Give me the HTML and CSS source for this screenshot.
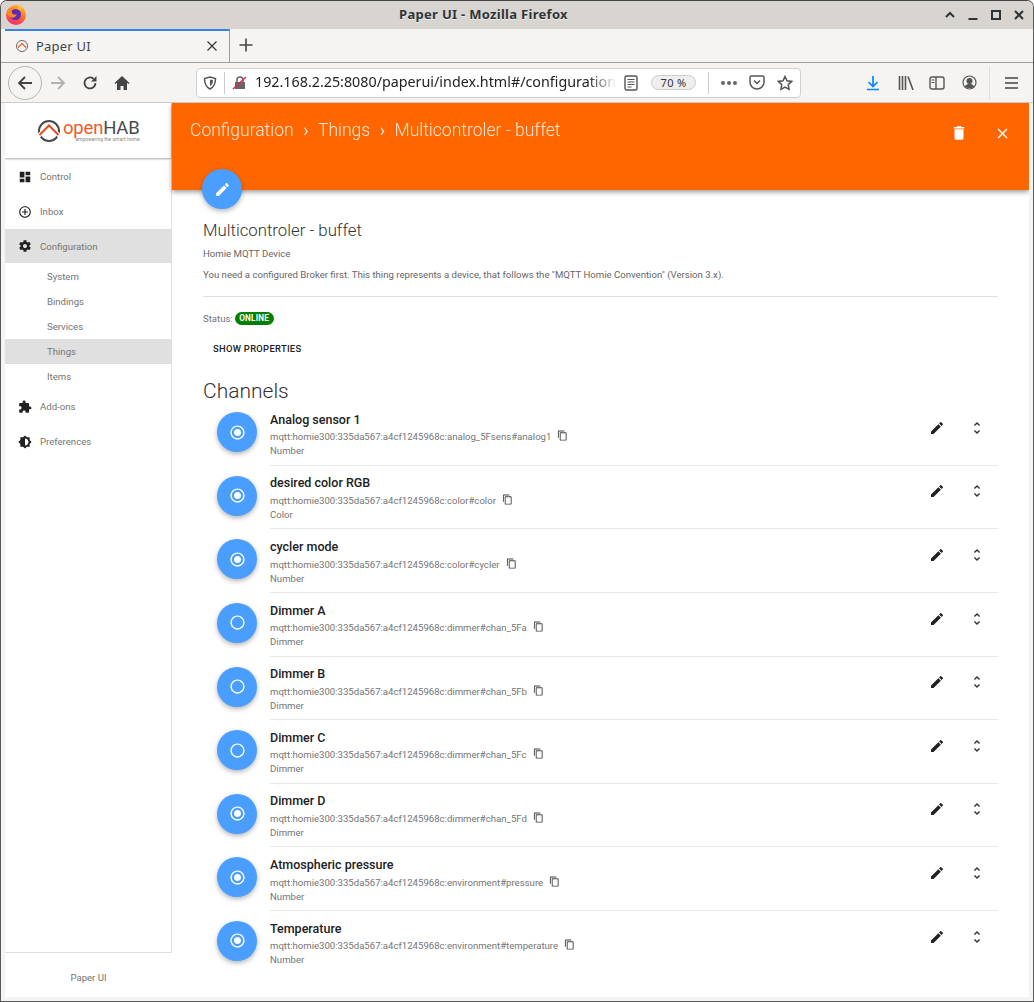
FILE: index.html
```html
<!DOCTYPE html>
<html>
<head>
	<meta http-equiv="Content-Type" content="text/html;charset=UTF-8">
	<title>Paper UI</title>
	<link rel="stylesheet" href="styles.css">
</head>
<body>
	<svg class="defs" width="0" height="0">
		<symbol id="i-edit" viewBox="0 0 24 24"><path d="M3 17.25V21h3.75L17.81 9.94l-3.75-3.75L3 17.25zM20.71 7.04c.39-.39.39-1.02 0-1.41l-2.34-2.34c-.39-.39-1.02-.39-1.41 0l-1.83 1.83 3.75 3.75 1.83-1.83z"/></symbol>
		<symbol id="i-delete" viewBox="0 0 24 24"><path d="M6 19c0 1.1.9 2 2 2h8c1.1 0 2-.9 2-2V7H6v12zM19 4h-3.5l-1-1h-5l-1 1H5v2h14V4z"/></symbol>
		<symbol id="i-close" viewBox="0 0 24 24"><path d="M19 6.41L17.59 5 12 10.59 6.41 5 5 6.41 10.59 12 5 17.59 6.41 19 12 13.41 17.59 19 19 17.59 13.41 12z"/></symbol>
		<symbol id="i-dash" viewBox="0 0 24 24"><path d="M3 13h8V3H3v10zm0 8h8v-6H3v6zm10 0h8V11h-8v10zm0-18v6h8V3h-8z"/></symbol>
		<symbol id="i-add" viewBox="0 0 24 24"><path d="M13 7h-2v4H7v2h4v4h2v-4h4v-2h-4V7zm-1-5C6.48 2 2 6.48 2 12s4.48 10 10 10 10-4.48 10-10S17.52 2 12 2zm0 18c-4.41 0-8-3.59-8-8s3.59-8 8-8 8 3.59 8 8-3.59 8-8 8z"/></symbol>
		<symbol id="i-gear" viewBox="0 0 24 24"><path d="M19.43 12.98c.04-.32.07-.64.07-.98s-.03-.66-.07-.98l2.11-1.65c.19-.15.24-.42.12-.64l-2-3.46c-.12-.22-.39-.3-.61-.22l-2.49 1c-.52-.4-1.08-.73-1.69-.98l-.38-2.65C14.46 2.18 14.25 2 14 2h-4c-.25 0-.46.18-.49.42l-.38 2.65c-.61.25-1.17.59-1.69.98l-2.49-1c-.23-.09-.49 0-.61.22l-2 3.46c-.13.22-.07.49.12.64l2.11 1.65c-.04.32-.07.65-.07.98s.03.66.07.98l-2.11 1.65c-.19.15-.24.42-.12.64l2 3.46c.12.22.39.3.61.22l2.49-1c.52.4 1.08.73 1.69.98l.38 2.65c.03.24.24.42.49.42h4c.25 0 .46-.18.49-.42l.38-2.65c.61-.25 1.17-.59 1.69-.98l2.49 1c.23.09.49 0 .61-.22l2-3.46c.12-.22.07-.49-.12-.64l-2.11-1.65zM12 15.5c-1.93 0-3.5-1.57-3.5-3.5s1.57-3.5 3.5-3.5 3.5 1.57 3.5 3.5-1.57 3.5-3.5 3.5z"/></symbol>
		<symbol id="i-ext" viewBox="0 0 24 24"><path d="M20.5 11H19V7c0-1.1-.9-2-2-2h-4V3.5C13 2.12 11.88 1 10.5 1S8 2.12 8 3.5V5H4c-1.1 0-1.99.9-1.99 2v3.8H3.5c1.49 0 2.7 1.21 2.7 2.7s-1.21 2.7-2.7 2.7H2V20c0 1.1.9 2 2 2h3.8v-1.5c0-1.49 1.21-2.7 2.7-2.7 1.49 0 2.7 1.21 2.7 2.7V22H17c1.1 0 2-.9 2-2v-4h1.5c1.38 0 2.5-1.12 2.5-2.5S21.88 11 20.5 11z"/></symbol>
		<symbol id="i-bright" viewBox="0 0 24 24"><path d="M20 15.31L23.31 12 20 8.69V4h-4.69L12 .69 8.69 4H4v4.69L.69 12 4 15.31V20h4.69L12 23.31 15.31 20H20v-4.69zM12 18V6c3.31 0 6 2.69 6 6s-2.69 6-6 6z"/></symbol>
		<symbol id="i-unfold" viewBox="0 0 24 24"><path d="M12 5.83L15.17 9l1.41-1.41L12 3 7.41 7.59 8.83 9 12 5.83zm0 12.34L8.83 15l-1.41 1.41L12 21l4.59-4.59L15.17 15 12 18.17z"/></symbol>
		<symbol id="i-on" viewBox="0 0 24 24"><path d="M12 7c-2.76 0-5 2.24-5 5s2.24 5 5 5 5-2.24 5-5-2.24-5-5-5zm0-5C6.48 2 2 6.48 2 12s4.48 10 10 10 10-4.48 10-10S17.52 2 12 2zm0 18c-4.42 0-8-3.58-8-8s3.58-8 8-8 8 3.58 8 8-3.58 8-8 8z"/></symbol>
		<symbol id="i-off" viewBox="0 0 24 24"><path d="M12 2C6.48 2 2 6.48 2 12s4.48 10 10 10 10-4.48 10-10S17.52 2 12 2zm0 18c-4.42 0-8-3.58-8-8s3.58-8 8-8 8 3.58 8 8-3.58 8-8 8z"/></symbol>
		<symbol id="i-copy" viewBox="0 0 24 24"><path d="M16 1H4c-1.1 0-2 .9-2 2v14h2V3h12V1zm3 4H8c-1.1 0-2 .9-2 2v14c0 1.1.9 2 2 2h11c1.1 0 2-.9 2-2V7c0-1.1-.9-2-2-2zm0 16H8V7h11v14z"/></symbol>
	</svg>

	<div class="window">
		<!-- title bar -->
		<div class="titlebar">
			<svg class="fx-logo" width="22" height="22" viewBox="0 0 22 22">
				<defs>
					<linearGradient id="fxg" x1="0.7" y1="0" x2="0.3" y2="1">
						<stop offset="0" stop-color="#ffbd2e"/>
						<stop offset="0.5" stop-color="#ff6a2b"/>
						<stop offset="1" stop-color="#f0267e"/>
					</linearGradient>
				</defs>
				<circle cx="11" cy="12" r="10" fill="url(#fxg)"/>
				<path d="M15 1c2 2 2 4 1 6l-3-1z" fill="#ffc93a"/>
				<circle cx="10.5" cy="11.5" r="5.5" fill="#5b2bb8"/>
				<path d="M2 9c1-3 4-5 7-4-2 1-3 3-2 5 1 2 4 2 5 1-1 3-4 5-7 3-2-1-3-3-3-5z" fill="#ff8a1f"/>
			</svg>
			<div class="win-title">Paper UI - Mozilla Firefox</div>
			<div class="win-btns">
				<svg width="12" height="12" viewBox="0 0 12 12"><path d="M2 8l4-4 4 4" fill="none" stroke="#2e3436" stroke-width="2"/></svg>
				<svg width="12" height="12" viewBox="0 0 12 12"><path d="M1.500 10h9" fill="none" stroke="#2e3436" stroke-width="2"/></svg>
				<svg width="12" height="12" viewBox="0 0 12 12"><path d="M2 2h8v8H2z" fill="none" stroke="#2e3436" stroke-width="2"/></svg>
				<svg width="12" height="12" viewBox="0 0 12 12"><path d="M2 2l8 8M10 2l-8 8" fill="none" stroke="#2e3436" stroke-width="2"/></svg>
			</div>
		</div>

		<!-- tabs -->
		<div class="tabbar">
			<div class="tab">
				<svg class="tab-fav" width="14" height="14" viewBox="0 0 14 14">
					<circle cx="7" cy="7" r="5.500" fill="none" stroke="#666" stroke-width="1"/>
					<path d="M3 8.500L7 4.500l4 4" fill="none" stroke="#e8562a" stroke-width="1.200"/>
				</svg>
				<span class="tab-name">Paper UI</span>
				<svg class="tab-x" width="12" height="12" viewBox="0 0 12 12"><path d="M1.500 1.500l9 9M10.500 1.500l-9 9" stroke="#3a3a3a" stroke-width="1.300"/></svg>
			</div>
			<svg class="tab-new" width="16" height="16" viewBox="0 0 16 16"><path d="M8 1.500v13M1.500 8h13" stroke="#444" stroke-width="1.600"/></svg>
		</div>

		<!-- toolbar -->
		<div class="toolbar">
			<div class="back-btn">
				<svg width="18" height="18" viewBox="0 0 18 18"><path d="M16 9H3M9 3L3 9l6 6" fill="none" stroke="#444" stroke-width="1.800"/></svg>
			</div>
			<svg class="tb-forward" width="18" height="18" viewBox="0 0 18 18"><path d="M2 9h13M9 3l6 6-6 6" fill="none" stroke="#b1b1b1" stroke-width="1.800"/></svg>
			<svg class="tb-reload" width="16" height="16" viewBox="0 0 16 16"><path d="M13.500 8A5.500 5.500 0 1 1 11.500 3.700" fill="none" stroke="#444" stroke-width="1.800"/><path d="M14.500 1v5.500H9z" fill="#444"/></svg>
			<svg class="tb-home" width="16" height="16" viewBox="0 0 16 16"><path d="M8 1L0.500 8l1 1L3 7.800V15h3.500v-4h3v4H13V7.800L14.500 9l1-1z" fill="#444"/></svg>
			<div class="urlbar">
				<svg class="url-shield" width="14" height="14" viewBox="0 0 14 14"><path d="M7 1l5.500 1.500c0 5-1.500 8.500-5.500 10.500C3 11 1.500 7.500 1.500 2.500z" fill="none" stroke="#555" stroke-width="1.500"/><path d="M7 3.500l3 .8c0 2.500-.8 4.500-3 5.700z" fill="#555"/></svg>
				<span class="url-sep"></span>
				<svg class="url-lock" width="16" height="16" viewBox="0 0 16 16"><path d="M3 7h10v7H3z" fill="#666"/><path d="M5 7V5a3 3 0 0 1 6 0v2" fill="none" stroke="#666" stroke-width="1.500"/><path d="M1 14L14 2" stroke="#e22850" stroke-width="1.500"/></svg>
				<span class="url-text">192.168.2.25:8080/paperui/index.html#/configuration</span>
				<svg class="url-reader" width="14" height="16" viewBox="0 0 14 16"><rect x="1" y="1" width="12" height="14" rx="1.500" fill="none" stroke="#555" stroke-width="1.400"/><path d="M3.500 4.500h7M3.500 7h7M3.500 9.500h7M3.500 12h4" stroke="#555" stroke-width="1.100"/></svg>
				<span class="url-zoom">70 %</span>
				<span class="url-sep url-sep2"></span>
				<span class="url-dots"><i></i><i></i><i></i></span>
				<svg class="url-pocket" width="16" height="15" viewBox="0 0 16 15"><path d="M1 2.500A1.500 1.500 0 0 1 2.500 1h11A1.500 1.500 0 0 1 15 2.500V7a7 7 0 0 1-14 0z" fill="none" stroke="#555" stroke-width="1.500"/><path d="M5 5.500l3 3 3-3" fill="none" stroke="#555" stroke-width="1.500"/></svg>
				<svg class="url-star" width="16" height="16" viewBox="0 0 16 16"><path d="M8 1.500l2 4.300 4.700.6-3.500 3.200.9 4.700L8 12l-4.100 2.300.9-4.700L1.300 6.400 6 5.800z" fill="none" stroke="#555" stroke-width="1.500"/></svg>
			</div>
			<svg class="tb-dl" width="14" height="16" viewBox="0 0 14 16"><path d="M7 1v10M2.500 7L7 11.500 11.500 7" fill="none" stroke="#0a84ff" stroke-width="1.700"/><path d="M1 14.500h12" stroke="#0a84ff" stroke-width="1.700"/></svg>
			<svg class="tb-lib" width="16" height="14" viewBox="0 0 16 14"><path d="M1.500 0v14M4.500 0v14M7.500 0v14M10 .5l5 13.500" fill="none" stroke="#555" stroke-width="1.600"/></svg>
			<svg class="tb-side" width="16" height="14" viewBox="0 0 16 14"><rect x="1" y="1" width="14" height="12" rx="2" fill="none" stroke="#555" stroke-width="1.400"/><path d="M7 1v12" stroke="#555" stroke-width="1.400"/><path d="M2.500 4h3M2.500 6.500h3" stroke="#555"/></svg>
			<svg class="tb-acct" width="15" height="15" viewBox="0 0 15 15"><circle cx="7.500" cy="7.500" r="6.500" fill="none" stroke="#555" stroke-width="1.200"/><circle cx="7.500" cy="6" r="3" fill="#555"/><path d="M2.800 11.500c1-2 2.800-2.500 4.700-2.500s3.700.5 4.700 2.500c-1.500 2-7.900 2-9.400 0z" fill="#555"/></svg>
			<span class="tb-sep"></span>
			<svg class="tb-menu" width="13" height="12" viewBox="0 0 13 12"><path d="M0 1h13M0 6h13M0 11h13" stroke="#444" stroke-width="1.500"/></svg>
		</div>

		<!-- page -->
		<div class="page">
			<div class="side-col">
				<div class="sidebar">
					<div class="brand">
						<svg width="24" height="24" viewBox="0 0 24 24"><circle cx="12" cy="12" r="10" fill="none" stroke="#4a4a4a" stroke-width="2"/><path d="M1.500 17L12 6.500 22.500 17" fill="none" stroke="#fff" stroke-width="4"/><path d="M2.500 16L12 6.500 21.500 16" fill="none" stroke="#e64a19" stroke-width="2"/></svg>
						<div class="brand-text">
							<div class="brand-name"><span class="brand-open">open</span><span class="brand-hab">HAB</span></div>
							<div class="brand-tag">empowering the smart home</div>
						</div>
					</div>
					<ul class="menu">
						<li class="menu-item"><svg class="menu-icon"><use href="#i-dash"/></svg>Control</li>
						<li class="menu-item"><svg class="menu-icon"><use href="#i-add"/></svg>Inbox</li>
						<li class="menu-item menu-active"><svg class="menu-icon"><use href="#i-gear"/></svg>Configuration</li>
						<li class="sub-item sub-first">System</li>
						<li class="sub-item">Bindings</li>
						<li class="sub-item">Services</li>
						<li class="sub-item sub-active">Things</li>
						<li class="sub-item">Items</li>
						<li class="menu-item"><svg class="menu-icon"><use href="#i-ext"/></svg>Add-ons</li>
						<li class="menu-item"><svg class="menu-icon"><use href="#i-bright"/></svg>Preferences</li>
					</ul>
				</div>
				<div class="side-foot">Paper UI</div>
			</div>

			<div class="main">
				<div class="head">
					<div class="crumbs">
						<span>Configuration</span><span class="crumb-sep">›</span><span>Things</span><span class="crumb-sep">›</span><span>Multicontroler - buffet</span>
					</div>
					<svg class="head-icon head-del"><use href="#i-delete"/></svg>
					<svg class="head-icon head-close"><use href="#i-close"/></svg>
					<div class="fab head-fab"><svg class="fab-edit"><use href="#i-edit"/></svg></div>
				</div>

				<div class="content">
					<h1 class="thing-name">Multicontroler - buffet</h1>
					<p class="thing-type">Homie MQTT Device</p>
					<p class="thing-desc">You need a configured Broker first. This thing represents a device, that follows the "MQTT Homie Convention" (Version 3.x).</p>
					<div class="status">Status: <span class="badge">ONLINE</span></div>
					<div class="show-props">SHOW PROPERTIES</div>
					<h2 class="channels-title">Channels</h2>

					<div class="row">
						<div class="fab"><svg class="fab-radio"><use href="#i-on"/></svg></div>
						<div class="row-text">
							<div class="row-name">Analog sensor 1</div>
							<div class="row-uid">mqtt:homie300:335da567:a4cf1245968c:analog_5Fsens#analog1<svg class="copy"><use href="#i-copy"/></svg></div>
							<div class="row-type">Number</div>
						</div>
						<svg class="row-edit"><use href="#i-edit"/></svg>
						<svg class="row-more"><use href="#i-unfold"/></svg>
					</div>
					<div class="row">
						<div class="fab"><svg class="fab-radio"><use href="#i-on"/></svg></div>
						<div class="row-text">
							<div class="row-name">desired color RGB</div>
							<div class="row-uid">mqtt:homie300:335da567:a4cf1245968c:color#color<svg class="copy"><use href="#i-copy"/></svg></div>
							<div class="row-type">Color</div>
						</div>
						<svg class="row-edit"><use href="#i-edit"/></svg>
						<svg class="row-more"><use href="#i-unfold"/></svg>
					</div>
					<div class="row">
						<div class="fab"><svg class="fab-radio"><use href="#i-on"/></svg></div>
						<div class="row-text">
							<div class="row-name">cycler mode</div>
							<div class="row-uid">mqtt:homie300:335da567:a4cf1245968c:color#cycler<svg class="copy"><use href="#i-copy"/></svg></div>
							<div class="row-type">Number</div>
						</div>
						<svg class="row-edit"><use href="#i-edit"/></svg>
						<svg class="row-more"><use href="#i-unfold"/></svg>
					</div>
					<div class="row">
						<div class="fab"><svg class="fab-radio"><use href="#i-off"/></svg></div>
						<div class="row-text">
							<div class="row-name">Dimmer A</div>
							<div class="row-uid">mqtt:homie300:335da567:a4cf1245968c:dimmer#chan_5Fa<svg class="copy"><use href="#i-copy"/></svg></div>
							<div class="row-type">Dimmer</div>
						</div>
						<svg class="row-edit"><use href="#i-edit"/></svg>
						<svg class="row-more"><use href="#i-unfold"/></svg>
					</div>
					<div class="row">
						<div class="fab"><svg class="fab-radio"><use href="#i-off"/></svg></div>
						<div class="row-text">
							<div class="row-name">Dimmer B</div>
							<div class="row-uid">mqtt:homie300:335da567:a4cf1245968c:dimmer#chan_5Fb<svg class="copy"><use href="#i-copy"/></svg></div>
							<div class="row-type">Dimmer</div>
						</div>
						<svg class="row-edit"><use href="#i-edit"/></svg>
						<svg class="row-more"><use href="#i-unfold"/></svg>
					</div>
					<div class="row">
						<div class="fab"><svg class="fab-radio"><use href="#i-off"/></svg></div>
						<div class="row-text">
							<div class="row-name">Dimmer C</div>
							<div class="row-uid">mqtt:homie300:335da567:a4cf1245968c:dimmer#chan_5Fc<svg class="copy"><use href="#i-copy"/></svg></div>
							<div class="row-type">Dimmer</div>
						</div>
						<svg class="row-edit"><use href="#i-edit"/></svg>
						<svg class="row-more"><use href="#i-unfold"/></svg>
					</div>
					<div class="row">
						<div class="fab"><svg class="fab-radio"><use href="#i-on"/></svg></div>
						<div class="row-text">
							<div class="row-name">Dimmer D</div>
							<div class="row-uid">mqtt:homie300:335da567:a4cf1245968c:dimmer#chan_5Fd<svg class="copy"><use href="#i-copy"/></svg></div>
							<div class="row-type">Dimmer</div>
						</div>
						<svg class="row-edit"><use href="#i-edit"/></svg>
						<svg class="row-more"><use href="#i-unfold"/></svg>
					</div>
					<div class="row">
						<div class="fab"><svg class="fab-radio"><use href="#i-on"/></svg></div>
						<div class="row-text">
							<div class="row-name">Atmospheric pressure</div>
							<div class="row-uid">mqtt:homie300:335da567:a4cf1245968c:environment#pressure<svg class="copy"><use href="#i-copy"/></svg></div>
							<div class="row-type">Number</div>
						</div>
						<svg class="row-edit"><use href="#i-edit"/></svg>
						<svg class="row-more"><use href="#i-unfold"/></svg>
					</div>
					<div class="row row-last">
						<div class="fab"><svg class="fab-radio"><use href="#i-on"/></svg></div>
						<div class="row-text">
							<div class="row-name">Temperature</div>
							<div class="row-uid">mqtt:homie300:335da567:a4cf1245968c:environment#temperature<svg class="copy"><use href="#i-copy"/></svg></div>
							<div class="row-type">Number</div>
						</div>
						<svg class="row-edit"><use href="#i-edit"/></svg>
						<svg class="row-more"><use href="#i-unfold"/></svg>
					</div>
				</div>
			</div>
		</div>
	</div>
</body>
</html>
```

FILE: styles.css
```css
*{ margin: 0; padding: 0; box-sizing: border-box; }
html,body{ width: 1034px; height: 1002px; overflow: hidden; background: #fff; }
body{ font-family: "Roboto", "Liberation Sans", sans-serif; }
.defs{ display: block; height: 0; }

/* browser window */
.window{ width: 1034px; height: 1002px; background: #f5f4f2; border: 1px solid #5a5a5a; border-top-color: #444; border-radius: 7px 7px 0 0; display: flex; flex-direction: column; overflow: hidden; padding-bottom: 4px; }

.titlebar{ height: 28px; flex: none; background: #d8d5d1; display: flex; align-items: center; padding: 0 8px 0 4px; }
.fx-logo{ flex: none; margin-top: -2px; }
.win-title{ flex: 1; text-align: center; font: bold 13px "Noto Sans", "DejaVu Sans", sans-serif; color: #2e3436; letter-spacing: 0.3px; margin: -2px 4px 0 0; text-shadow: 0 1px 0 #eee; }
.win-btns{ display: flex; gap: 11px; }

.tabbar{ height: 34px; flex: none; display: flex; align-items: center; padding-left: 4px; padding-bottom: 1px; border-bottom: 1px solid #a09f9d; }
.tab{ width: 225px; height: 33px; margin-bottom: -1px; background: #f5f4f2; border-top: 2px solid #3584e4; border-right: 1px solid #a09f9d; display: flex; align-items: center; padding: 0 11px 2px 10px; }
.tab-fav{ flex: none; }
.tab-name{ flex: 1; margin-left: 7px; font: 13px "Noto Sans", "DejaVu Sans", sans-serif; color: #444; letter-spacing: 0.2px; }
.tab-new{ margin-left: 8px; }

.toolbar{ height: 40px; flex: none; display: flex; align-items: center; padding-left: 7px; border-bottom: 1px solid #ccc; }
.back-btn{ width: 34px; height: 34px; flex: none; border: 1px solid #b4b4b4; border-radius: 50%; display: flex; align-items: center; justify-content: center; }
.tb-forward{ margin-left: 7px; }
.tb-reload{ margin-left: 15px; }
.tb-home{ margin-left: 16px; }
.urlbar{ width: 605px; height: 30px; margin-left: 66px; flex: none; background: #fff; border: 1px solid #d0cfcd; border-radius: 4px; display: flex; align-items: center; padding-left: 6px; }
.url-shield{ flex: none; }
.url-sep{ width: 1px; height: 22px; background: #ccc; margin-left: 7px; flex: none; }
.url-lock{ margin-left: 7px; flex: none; }
.url-text{ width: 362px; flex: none; margin: -2px 0 0 7px; font: 14.300px "Noto Sans", "DejaVu Sans", sans-serif; color: #222; white-space: nowrap; -webkit-mask-image: linear-gradient(to right, #000 92%, transparent 100%); mask-image: linear-gradient(to right, #000 92%, transparent 100%); }
.url-reader{ margin-left: 7px; flex: none; }
.url-zoom{ width: 45px; height: 15px; margin-left: 13px; flex: none; background: #eee; border: 1px solid #ccc; border-radius: 8px; font: 11px/13px "Noto Sans", "DejaVu Sans", sans-serif; text-align: center; color: #333; letter-spacing: 0.3px; }
.url-sep2{ margin-left: 12px; }
.url-dots{ display: flex; gap: 2px; margin-left: 12px; }
.url-dots i{ width: 4px; height: 4px; border-radius: 50%; background: #666; }
.url-pocket{ margin-left: 12px; flex: none; }
.url-star{ margin-left: 12px; flex: none; }
.tb-dl{ margin-left: 65px; flex: none; }
.tb-lib{ margin-left: 18px; flex: none; }
.tb-side{ margin-left: 15px; flex: none; }
.tb-acct{ margin-left: 17px; flex: none; }
.tb-sep{ width: 1px; height: 34px; background: #e0dfdd; margin-left: 12px; flex: none; }
.tb-menu{ margin-left: 15px; flex: none; }

/* page area */
.page{ flex: 1; min-height: 0; margin: 0 4px; background: #fff; display: flex; overflow: hidden; }
.side-col{ width: 167px; flex: none; display: flex; flex-direction: column; }
.sidebar{ height: 850px; border-right: 1px solid #e0e0e0; border-bottom: 1px solid #e0e0e0; }
.brand{ height: 55px; margin-bottom: 1px; display: flex; align-items: center; justify-content: flex-start; gap: 2px; box-shadow: 0 1px 2px rgba(0,0,0,0.35); padding-left: 32px; }
.brand-text{ line-height: 1; }
.brand-name{ font-size: 18.500px; line-height: 17px; letter-spacing: -0.2px; }
.brand-open{ color: #f1592a; }
.brand-hab{ color: #4a4a4a; }
.brand-tag{ font-size: 5px; line-height: 5px; color: #888; text-align: right; }
.menu{ list-style: none; }
.menu-item{ height: 35px; display: flex; align-items: center; padding-left: 13px; font-size: 9.600px; color: #757575; }
.menu-icon{ width: 14px; height: 14px; margin-right: 8px; fill: #212121; flex: none; }
.menu-active{ height: 34px; background: #e0e0e0; }
.sub-item{ height: 25px; line-height: 25px; padding-left: 42px; font-size: 9.600px; color: #757575; }
.sub-first{ margin-top: 1px; }
.sub-active{ background: #e0e0e0; }
.side-foot{ text-align: center; font-size: 9.600px; color: #757575; margin-top: 19px; }

.main{ flex: 1; min-width: 0; }
.head{ height: 87px; background: #ff6600; box-shadow: 0 2px 5px rgba(0,0,0,0.4); position: relative; display: flex; align-items: flex-start; padding: 15px 0 0 18px; }
.crumbs{ flex: 1; font-size: 17.550px; font-weight: 300; color: #fff; opacity: 0.85; line-height: 24px; }
.crumb-sep{ margin: 0 9.500px; font-weight: 400; }
.head-icon{ fill: #fff; flex: none; }
.head-del{ width: 18px; height: 18px; margin: 6px 25.500px 0 0; }
.head-close{ width: 17px; height: 17px; margin: 6.500px 18.500px 0 0; }
.fab{ width: 40px; height: 40px; flex: none; border-radius: 50%; background: #4a9eff; box-shadow: 0 2px 5px rgba(0,0,0,0.3); display: flex; align-items: center; justify-content: center; }
.head-fab{ position: absolute; left: 30px; top: 66px; }
.fab-edit{ width: 17px; height: 17px; fill: #fff; }
.fab-radio{ width: 17px; height: 17px; fill: #fff; }

.content{ padding: 30px 31px 0 31px; }
.thing-name{ font-size: 16.800px; font-weight: 300; line-height: 20px; color: #333; }
.thing-type{ font-size: 9.600px; line-height: 12px; color: #666; margin-top: 8px; }
.thing-desc{ font-size: 9.600px; line-height: 12px; color: #666; margin-top: 9px; padding-bottom: 15px; border-bottom: 1px solid #e0e0e0; }
.status{ font-size: 9.600px; color: #757575; margin-top: 15px; display: flex; align-items: center; gap: 2px; height: 13px; }
.badge{ height: 13px; padding: 0 4.500px; border-radius: 7px; background: #008000; color: #fff; font-size: 8.200px; font-weight: 700; line-height: 13px; letter-spacing: 0.2px; }
.show-props{ font-size: 9.400px; font-weight: 500; color: #212121; margin-top: 18px; padding-left: 10px; line-height: 12px; letter-spacing: 0.3px; }
.channels-title{ font-size: 21px; font-weight: 300; color: #333; line-height: 28px; margin-top: 22px; margin-bottom: -2.800px; }

.row{ height: 63.600px; display: flex; align-items: flex-start; padding-left: 14px; position: relative; }
.row .fab{ margin-top: 10px; }
.row-text{ flex: 1; margin-left: 13px; height: 100%; padding-top: 9.600px; border-bottom: 1px solid #e8e8e8; min-width: 0; }
.row-last .row-text{ border-bottom: 0; }
.row-name{ font-size: 12.500px; font-weight: 500; color: #212121; line-height: 16px; }
.row-uid{ font-size: 9.600px; line-height: 12px; color: #757575; margin-top: 3.600px; display: flex; align-items: center; white-space: nowrap; }
.row-type{ font-size: 9.600px; line-height: 12px; color: #757575; margin-top: 2px; }
.copy{ width: 11px; height: 11px; fill: #444; margin-left: 6px; margin-top: -3px; flex: none; }
.row-edit{ position: absolute; right: 53px; top: 17.600px; width: 16px; height: 16px; fill: #212121; }
.row-more{ position: absolute; right: 13px; top: 17.600px; width: 16px; height: 16px; fill: #333; }
```
